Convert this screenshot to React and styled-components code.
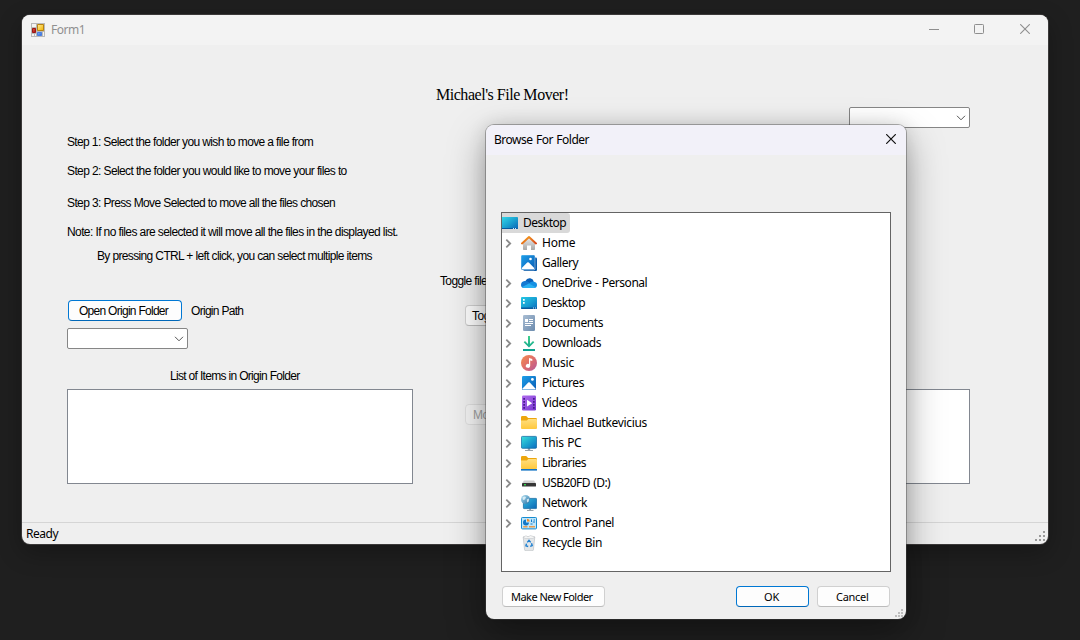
import React from "react";
import styled, { createGlobalStyle } from "styled-components";

const GlobalStyle = createGlobalStyle`
  *, *::before, *::after { box-sizing: border-box; }
  html, body, #root { height: 100%; }
  body { margin: 0; overflow: hidden; background: #1f1f1f; color: #000; }
`;

const ui = `"Noto Sans", "Open Sans", sans-serif`;
const form = `"Liberation Sans", Arial, sans-serif`;

const DesktopArea = styled.div`
  position: relative;
  width: 1080px;
  height: 640px;
  overflow: hidden;
  background: #1f1f1f;
`;

const WindowFrame = styled.section`
  position: absolute;
  display: flex;
  flex-direction: column;
  overflow: hidden;
  background: #efefef;
  border-radius: 8px;
`;

const FormWindow = styled(WindowFrame)`
  left: 22px;
  top: 15px;
  width: 1026px;
  height: 529px;
  box-shadow: 0 0 0 1px #3b3939, 0 8px 24px rgba(0, 0, 0, 0.3);
`;

const DialogWindow = styled(WindowFrame)`
  left: 486px;
  top: 125px;
  width: 420px;
  height: 494px;
  box-shadow: 0 0 0 1px rgba(70, 70, 70, 0.42), 0 15px 38px rgba(0, 0, 0, 0.36), 0 0 18px rgba(0, 0, 0, 0.12);
`;

const TitleBar = styled.header`
  flex: none;
  display: flex;
  align-items: center;
  height: 30px;
  padding-left: ${(p) => (p.$dialog ? 8 : 9)}px;
  background: ${(p) => (p.$dialog ? "#f2f1f9" : "#f3f3f3")};
`;

const TitleText = styled.h1`
  flex: 1;
  margin: 0;
  font: 12px/16px ${ui};
  letter-spacing: ${(p) => (p.$dialog ? -0.48 : -0.5)}px;
  word-spacing: ${(p) => (p.$dialog ? 0.7 : 0)}px;
  color: ${(p) => (p.$inactive ? "#909090" : "#000")};
  padding-left: ${(p) => (p.$inactive ? 5 : 0)}px;
`;

const CaptionButton = styled.button`
  display: flex;
  align-items: flex-start;
  justify-content: center;
  width: ${(p) => p.$width || 46}px;
  height: 30px;
  padding: 9px 0 0;
  border: 0;
  background: transparent;
  color: ${(p) => (p.$inactive ? "#8e8e8e" : "#111")};
`;

const Caption = styled.div`
  display: flex;
`;

const FormBody = styled.main`
  flex: 1;
  display: grid;
  grid-template-columns: 346px 211px 346px;
  padding-left: 45px;
`;

const Column = styled.div`
  display: flex;
  flex-direction: column;
  align-items: flex-start;
  padding-top: ${(p) => p.$top}px;
`;

const Label = styled.span`
  font: 12px/14px ${form};
  letter-spacing: ${(p) => p.$track ?? -0.64}px;
  white-space: pre;
  margin-top: ${(p) => p.$gap || 0}px;
  margin-left: ${(p) => p.$indent || 0}px;
`;

const Heading = styled.h2`
  margin: 0 0 0 23px;
  font: 16px/20px "Liberation Serif", "Times New Roman", serif;
  letter-spacing: -0.47px;
  white-space: nowrap;
`;

const ButtonRow = styled.div`
  display: flex;
  align-items: center;
  gap: 9px;
  margin: 37px 0 0 1px;
`;

const PushButton = styled.button`
  flex: none;
  width: ${(p) => p.$width}px;
  height: 21px;
  margin: ${(p) => p.$margin || "0"};
  padding: 0 0 0 ${(p) => p.$inset || 0}px;
  text-align: left;
  border: 1px solid ${(p) => (p.$accent ? "#0078d4" : "#d0d0d0")};
  border-bottom-color: ${(p) => (p.$accent ? "#0067b8" : "#bcbcbc")};
  border-radius: 4px;
  background: #fdfdfd;
  color: #000;
  font: 12px/18px ${form};
  letter-spacing: ${(p) => p.$track ?? -0.5}px;
  white-space: nowrap;

  &:disabled {
    background: #f4f4f4;
    border-color: #dfdfdf;
    color: #a0a0a0;
  }
`;

const DialogButton = styled(PushButton)`
  font: 11px/18px ${ui};
`;

const ComboBox = styled.div`
  display: flex;
  align-items: center;
  justify-content: flex-end;
  width: 121px;
  height: 21px;
  margin: ${(p) => p.$margin};
  padding-right: 3px;
  border: 1px solid #868686;
  border-radius: 2px;
  background: #fff;
`;

const ListBox = styled.div`
  width: 346px;
  height: 95px;
  margin-top: ${(p) => p.$gap}px;
  border: 1px solid #828790;
  background: #fff;
`;

const StatusBar = styled.footer`
  flex: none;
  display: flex;
  align-items: center;
  justify-content: space-between;
  height: 22px;
  padding: 1px 3px 0 4px;
  border-top: 1px solid #d5d5d5;
`;

const StatusText = styled.span`
  font: 12px/16px ${ui};
  letter-spacing: -0.48px;
`;

const TreeBox = styled.ul`
  flex: none;
  list-style: none;
  width: 390px;
  height: 360px;
  margin: 57px 0 0 15px;
  padding: 0;
  border: 1px solid #646464;
  background: #fff;
`;

const TreeRow = styled.li`
  display: flex;
  align-items: center;
  width: fit-content;
  height: 20px;
  padding-right: 4px;
  border-radius: 0 3px 3px 0;
  background: ${(p) => (p.$selected ? "#d9d9d9" : "transparent")};

  > svg { flex: none; display: block; }
`;

const Twisty = styled.span`
  display: grid;
  place-items: center;
  width: 13px;
  height: 20px;
  margin-right: 6px;
`;

const TreeText = styled.span`
  margin-left: 5px;
  font: 12px/18px ${ui};
  letter-spacing: ${(p) => p.$track}px;
  word-spacing: 0.8px;
  white-space: nowrap;
`;

const DialogFooter = styled.footer`
  display: flex;
  gap: 8px;
  padding: 14px 16px 0 16px;
`;

const Spacer = styled.div`
  flex: 1;
`;

const GripCorner = styled.div`
  display: flex;
  justify-content: flex-end;
  margin-top: ${(p) => p.$gap || 0}px;
  padding-right: ${(p) => p.$right || 0}px;
`;

const Icon = ({ children }) => (
  <svg width="16" height="16" viewBox="0 0 16 16">{children}</svg>
);

const Grad = ({ id, from, to, mid }) => (
  <linearGradient id={id} x1="0" y1="0" x2="1" y2="1">
    <stop offset="0" stopColor={from} />
    {mid && <stop offset=".5" stopColor={mid} />}
    <stop offset="1" stopColor={to} />
  </linearGradient>
);

const AppIcon = () => (
  <svg width="15" height="14" viewBox="0 0 15 14">
    <defs>
      <Grad id="appY" from="#ffee9a" to="#f2b200" />
      <Grad id="appR" from="#e0604a" to="#a00c0c" />
      <Grad id="appB" from="#83b4ff" to="#2a63d0" />
    </defs>
    <path d="M0 0H14V14H0Z" fill="#b9b9b9" />
    <path d="M1 1H5V4H1ZM1 11H3V13H1ZM4 11H5V13H4ZM12 9H13V13H12Z" fill="#f4f4f4" />
    <path d="M6.5 1.5H12.5V7.5H6.5Z" fill="url(#appY)" stroke="#b88412" />
    <path d="M1.5 5.5H4.5V9.5H1.5Z" fill="url(#appR)" stroke="#a01515" />
    <path d="M6.5 9.5H10.5V12.5H6.5Z" fill="url(#appB)" stroke="#4a7ee0" />
  </svg>
);

const ChevronDown = () => (
  <svg width="10" height="6" viewBox="0 0 10 6" fill="none" stroke="#555" strokeWidth="1">
    <path d="M1 .8 5 4.8 9 .8" />
  </svg>
);

const ChevronRight = () => (
  <svg width="7" height="9" viewBox="0 0 7 9" fill="none" stroke="#8a8a8a" strokeWidth="1.8">
    <path d="M1.3 .7 5.2 4.5 1.3 8.3" />
  </svg>
);

const CloseGlyph = ({ w = 1.1 }) => (
  <svg width="10" height="10" viewBox="0 0 10 10" fill="none" stroke="currentColor" strokeWidth={w}>
    <path d="M.2 .2 9.8 9.8M9.8 .2 .2 9.8" />
  </svg>
);

const MinGlyph = () => (
  <svg width="10" height="10" viewBox="0 0 10 10"><path d="M0 5H10V6H0Z" fill="currentColor" /></svg>
);

const MaxGlyph = () => (
  <svg width="10" height="10" viewBox="0 0 10 10" fill="none" stroke="currentColor">
    <rect x=".5" y=".5" width="9" height="9" rx=".8" />
  </svg>
);

const Grip = ({ color, step }) => (
  <svg width={step * 2 + 2} height={step * 2 + 2} fill={color}>
    {[[2, 0], [1, 1], [2, 1], [0, 2], [1, 2], [2, 2]].map(([x, y]) => (
      <rect key={`${x}${y}`} x={x * step} y={y * step} width="2" height="2" />
    ))}
  </svg>
);

const RootDesktopIcon = () => (
  <Icon>
    <defs><Grad id="rootDesk" from="#35d7e8" to="#0b63b5" mid="#1aa2d0" /></defs>
    <path d="M0 2H15.2Q16 2 16 2.8V13.2Q16 14 15.2 14H0Z" fill="url(#rootDesk)" />
    <path d="M0 13H15.8Q15.6 14 15 14H0Z" fill="#075a9e" />
    <path d="M11 13h1v1h-1zM13 13h1v1h-1z" fill="#cfe8ff" />
  </Icon>
);

const HomeIcon = () => (
  <Icon>
    <defs>
      <linearGradient id="homeW" x1="0" y1="0" x2="0" y2="1">
        <stop offset="0" stopColor="#ededed" /><stop offset="1" stopColor="#a8a8a8" />
      </linearGradient>
      <Grad id="homeR" from="#f7a21b" to="#d8481c" />
    </defs>
    <path d="M2 7.5 8 2 14 7.5V14.2Q14 15 13.2 15H10V10.5H6V15H2.8Q2 15 2 14.2Z" fill="url(#homeW)" />
    <path d="M1 8.4 8 2 15 8.4" fill="none" stroke="url(#homeR)" strokeWidth="2" strokeLinecap="round" strokeLinejoin="round" />
  </Icon>
);

const GalleryIcon = () => (
  <Icon>
    <defs><Grad id="gal" from="#1da0ea" to="#0a5cb4" /></defs>
    <path d="M14 2.5H15.3Q16 3 16 4V15Q16 16 15 16H3.5Q2.4 16 2.2 14.5H14Z" fill="#0b5cab" />
    <rect width="14" height="15" rx="1.3" fill="url(#gal)" stroke="#fff" strokeWidth=".4" />
    <path d="M.8 14.3V13L6.2 7.6Q7 6.8 7.8 7.6L13.2 13V14.3Z" fill="#fff" />
    <circle cx="9.5" cy="4" r="1.3" fill="#fff" />
  </Icon>
);

const OneDriveIcon = () => (
  <Icon>
    <path d="M4.2 6.2Q6 2.8 9.2 3.3 12 3.8 12.8 6.4L9 9 2 10Z" fill="#0a60b8" />
    <path d="M0 10Q0 6.5 3.6 6Q5 5.6 6.5 6.6L12 10 9 13H3.4Q0 13 0 10Z" fill="#1479d2" />
    <path d="M7.5 9Q10 6.2 13 6.7 16 7.3 16 10 16 13 13 13H7Z" fill="#1690e3" />
    <path d="M1 12 8 8.6 14.8 12.3Q14 13 13 13H3.4Q1.8 13 1 12Z" fill="#29b0f2" />
  </Icon>
);

const DesktopIcon = () => (
  <Icon>
    <defs><Grad id="desk" from="#25c7e4" to="#0b6cbd" mid="#19a3d4" /></defs>
    <rect y="2" width="16" height="12" rx="1" fill="url(#desk)" />
    <path d="M2 4H3.7V5.7H2ZM2 7H3.7V8.7H2Z" fill="#fff" />
    <path d="M0 12.5H16V13Q16 14 15 14H1Q0 14 0 13Z" fill="#075a9e" />
    <path d="M12 12.6h1v1h-1zM14 12.6h1v1h-1z" fill="#cfe8ff" />
  </Icon>
);

const DocumentIcon = () => (
  <Icon>
    <defs><Grad id="doc" from="#a9bdd3" to="#6c8bae" /></defs>
    <rect x="2" width="12" height="16" rx="1.3" fill="url(#doc)" />
    <path d="M4 4H7V7H4ZM8 4H12V5H8ZM8 6H12V7H8ZM4 8H12V9H4ZM4 10H10V11H4Z" fill="#fff" />
  </Icon>
);

const DownloadIcon = () => (
  <Icon>
    <defs>
      <linearGradient id="dl" x1="0" y1="0" x2="0" y2="1">
        <stop offset="0" stopColor="#3fd08b" /><stop offset="1" stopColor="#0b9f92" />
      </linearGradient>
    </defs>
    <path d="M7 1H9V9L12 6 13.3 7.3 8 12.6 2.7 7.3 4 6 7 9ZM2 14H14V16H2Z" fill="url(#dl)" />
  </Icon>
);

const MusicIcon = () => (
  <Icon>
    <defs><Grad id="mus" from="#f58d4d" to="#b3569c" mid="#df6e6c" /></defs>
    <circle cx="8" cy="8" r="8" fill="url(#mus)" />
    <path d="M8 3 11.3 4V6L9.2 5.4V10.8A2.2 2 0 1 1 8 9.1Z" fill="#fff" />
  </Icon>
);

const PictureIcon = () => (
  <Icon>
    <defs><Grad id="pic" from="#1da0ea" to="#0a5cb4" /></defs>
    <rect x="1" y="1" width="14" height="14" rx="1.2" fill="url(#pic)" />
    <path d="M1.8 14.4V13.2L7.2 7.6Q8 6.8 8.8 7.6L14.2 13.2V14.4Z" fill="#fff" />
    <circle cx="11.4" cy="4.4" r="1.4" fill="#fff" />
  </Icon>
);

const VideoIcon = () => (
  <Icon>
    <defs><Grad id="vid" from="#b06bee" to="#7838cf" /></defs>
    <rect x="1" y=".5" width="14" height="15" rx="1.2" fill="url(#vid)" />
    <path d="M2.3 3H4V4.7H2.3ZM2.3 6H4V7.7H2.3ZM2.3 9H4V10.7H2.3ZM2.3 12H4V13.7H2.3ZM12 3H13.7V4.7H12ZM12 6H13.7V7.7H12ZM12 9H13.7V10.7H12ZM12 12H13.7V13.7H12Z" fill="#451a8c" />
    <path d="M6 4.8 11.2 8.2 6 11.6Z" fill="#fff" />
  </Icon>
);

const FolderShape = ({ id }) => (
  <>
    <defs>
      <linearGradient id={id} x1="0" y1="0" x2="0" y2="1">
        <stop offset="0" stopColor="#ffdf80" /><stop offset="1" stopColor="#ffc83c" />
      </linearGradient>
    </defs>
    <path d="M0 2.2Q0 1 1.2 1H5.2L7.2 3H14.8Q16 3 16 4.2V8H0Z" fill="#eda60c" />
    <path d="M0 5.5H5.8L7.4 4H15Q16 4 16 5V13Q16 14 15 14H1Q0 14 0 13Z" fill={`url(#${id})`} />
  </>
);

const FolderIcon = () => <Icon><FolderShape id="fold" /></Icon>;

const LibraryIcon = () => (
  <Icon>
    <FolderShape id="lib" />
    <rect y="14" width="16" height="1.6" fill="#1273c4" />
  </Icon>
);

const PcIcon = () => (
  <Icon>
    <defs><Grad id="pc" from="#3be0dc" to="#0b6cc0" mid="#1da6cf" /></defs>
    <path d="M6.8 13H9.2V15H12V16H4V15H6.8Z" fill="#9aa3ab" />
    <rect x=".4" y="1.4" width="15.2" height="11.9" rx="1" fill="url(#pc)" stroke="#176fa5" strokeWidth=".8" />
  </Icon>
);

const UsbIcon = () => (
  <Icon>
    <path d="M3 5.6H13L15 8.5H1Z" fill="#cfcfcf" />
    <rect x="1" y="8" width="14" height="3.6" rx=".7" fill="#363636" />
    <rect x="3" y="9" width="2" height="1.4" fill="#35d04b" />
  </Icon>
);

const NetworkIcon = () => (
  <Icon>
    <defs><Grad id="net" from="#35bede" to="#0b65b5" /><Grad id="glb" from="#b7e3f4" to="#236fa4" /></defs>
    <path d="M8.2 13.5H10V15H12.5V16H6V15H8.2Z" fill="#9aa3ab" />
    <rect x="2.4" y="3.4" width="13.2" height="10.2" rx=".7" fill="url(#net)" stroke="#1a6fa5" strokeWidth=".8" />
    <circle cx="4.5" cy="4.5" r="4.5" fill="url(#glb)" />
    <path d="M1.5 2.5Q3.5 1 5 2L4 4.5 2 5ZM5.8 4.4 8 3.6 7.8 6.4 6 7.6Z" fill="#eaf7fb" opacity=".8" />
  </Icon>
);

const ControlPanelIcon = () => (
  <Icon>
    <rect x=".5" y="2.5" width="15" height="11.4" rx=".8" fill="#bfe6fa" stroke="#168bd0" />
    <path d="M5 4.5A3 3 0 1 0 8 7.6H5Z" fill="#1379c8" />
    <path d="M6 3.8A3 3 0 0 1 8.8 6.6H6Z" fill="#f08a24" />
    <path d="M10 4.5H11V7H10ZM12.5 4.5H14V5.5H12.5ZM11.8 6.5H14V7.5H11.8ZM9.5 8.6H11.5V9.6H9.5Z" fill="#1379c8" />
    <path d="M2.2 11.2H6.5V12.4H2.2Z" fill="#f08a24" />
    <path d="M8 11.2H14V12.4H8Z" fill="#f08a24" />
  </Icon>
);

const RecycleIcon = () => (
  <Icon>
    <path d="M2.2 2H13.8L12.4 14.8Q12.3 15.8 11.3 15.8H4.7Q3.7 15.8 3.6 14.8Z" fill="#e3e6e8" stroke="#b4b9bd" strokeWidth=".6" />
    <path d="M2.2 2 5 .8 7 1.8 9.5 .6 13.8 2 12 3.4H4Z" fill="#f8f8f8" stroke="#b4b9bd" strokeWidth=".5" />
    <path d="M6.3 7.4 8 5.4 9.7 7.4M10.5 8.3 11.2 10.6 9.2 11.4M7.2 11.5 4.9 10.8 5.5 8.6" fill="none" stroke="#1d7fd0" strokeWidth="1.4" />
  </Icon>
);

const tree = [
  { name: "Home", icon: HomeIcon, track: -0.2 },
  { name: "Gallery", icon: GalleryIcon, track: -0.48, leaf: true },
  { name: "OneDrive - Personal", icon: OneDriveIcon, track: -0.47 },
  { name: "Desktop", icon: DesktopIcon, track: -0.5 },
  { name: "Documents", icon: DocumentIcon, track: -0.4 },
  { name: "Downloads", icon: DownloadIcon, track: -0.42 },
  { name: "Music", icon: MusicIcon, track: -0.18 },
  { name: "Pictures", icon: PictureIcon, track: -0.38 },
  { name: "Videos", icon: VideoIcon, track: -0.38 },
  { name: "Michael Butkevicius", icon: FolderIcon, track: -0.34 },
  { name: "This PC", icon: PcIcon, track: -0.34 },
  { name: "Libraries", icon: LibraryIcon, track: -0.52 },
  { name: "USB20FD (D:)", icon: UsbIcon, track: -0.57 },
  { name: "Network", icon: NetworkIcon, track: -0.46 },
  { name: "Control Panel", icon: ControlPanelIcon, track: -0.37 },
  { name: "Recycle Bin", icon: RecycleIcon, track: -0.36, leaf: true },
];

const MainForm = () => (
  <FormWindow>
    <TitleBar>
      <AppIcon />
      <TitleText $inactive>Form1</TitleText>
      <Caption>
        <CaptionButton $inactive aria-label="Minimize" $width={44}><MinGlyph /></CaptionButton>
        <CaptionButton $inactive aria-label="Maximize"><MaxGlyph /></CaptionButton>
        <CaptionButton $inactive aria-label="Close"><CloseGlyph /></CaptionButton>
      </Caption>
    </TitleBar>
    <FormBody>
      <Column $top={90}>
        <Label $track={-0.63}>Step 1: Select the folder you wish to move a file from</Label>
        <Label $gap={15} $track={-0.61}>Step 2: Select the folder you would like to move your files to</Label>
        <Label $gap={18} $track={-0.62}>Step 3: Press Move Selected to move all the files chosen</Label>
        <Label $gap={15} $track={-0.6}>Note: If no files are selected it will move all the files in the displayed list.</Label>
        <Label $gap={10} $indent={30} $track={-0.64}>By pressing CTRL + left click, you can select multiple items</Label>
        <ButtonRow>
          <PushButton $accent $width={114} $inset={10} $track={-0.72}>Open Origin Folder</PushButton>
          <Label $track={-0.7}>Origin Path</Label>
        </ButtonRow>
        <ComboBox $margin="7px 0 0"><ChevronDown /></ComboBox>
        <Label $gap={20} $indent={103} $track={-0.68}>List of Items in Origin Folder</Label>
        <ListBox $gap={6} />
      </Column>
      <Column $top={40}>
        <Heading>Michael's File Mover!</Heading>
        <Label $gap={169} $indent={27}>Toggle files</Label>
        <PushButton $width={75} $inset={6} $margin="17px 0 0 52px">Toggle</PushButton>
        <PushButton $width={90} $inset={7} $margin="78px 0 0 52px" disabled>Move Selected</PushButton>
      </Column>
      <Column $top={62}>
        <ComboBox $margin="0 0 0 225px"><ChevronDown /></ComboBox>
        <ListBox $gap={261} />
      </Column>
    </FormBody>
    <StatusBar>
      <StatusText>Ready</StatusText>
      <GripCorner $gap={3}><Grip color="#9a9a9a" step={4} /></GripCorner>
    </StatusBar>
  </FormWindow>
);

const BrowseDialog = () => (
  <DialogWindow role="dialog" aria-label="Browse For Folder">
    <TitleBar $dialog>
      <TitleText $dialog>Browse For Folder</TitleText>
      <CaptionButton aria-label="Close" $width={30}><CloseGlyph w={1.2} /></CaptionButton>
    </TitleBar>
    <TreeBox>
      <TreeRow $selected>
        <RootDesktopIcon />
        <TreeText $track={-0.5}>Desktop</TreeText>
      </TreeRow>
      {tree.map(({ name, icon: Glyph, track, leaf }) => (
        <TreeRow key={name}>
          <Twisty>{!leaf && <ChevronRight />}</Twisty>
          <Glyph />
          <TreeText $track={track}>{name}</TreeText>
        </TreeRow>
      ))}
    </TreeBox>
    <DialogFooter>
      <DialogButton $width={103} $inset={8} $track={-0.54}>Make New Folder</DialogButton>
      <Spacer />
      <DialogButton $accent $width={73} $inset={27} $track={-0.2}>OK</DialogButton>
      <DialogButton $width={73} $inset={18} $track={-0.3}>Cancel</DialogButton>
    </DialogFooter>
    <GripCorner $gap={2} $right={3}><Grip color="#bdbdbd" step={3} /></GripCorner>
  </DialogWindow>
);

export default function App() {
  return (
    <DesktopArea>
      <GlobalStyle />
      <MainForm />
      <BrowseDialog />
    </DesktopArea>
  );
}
